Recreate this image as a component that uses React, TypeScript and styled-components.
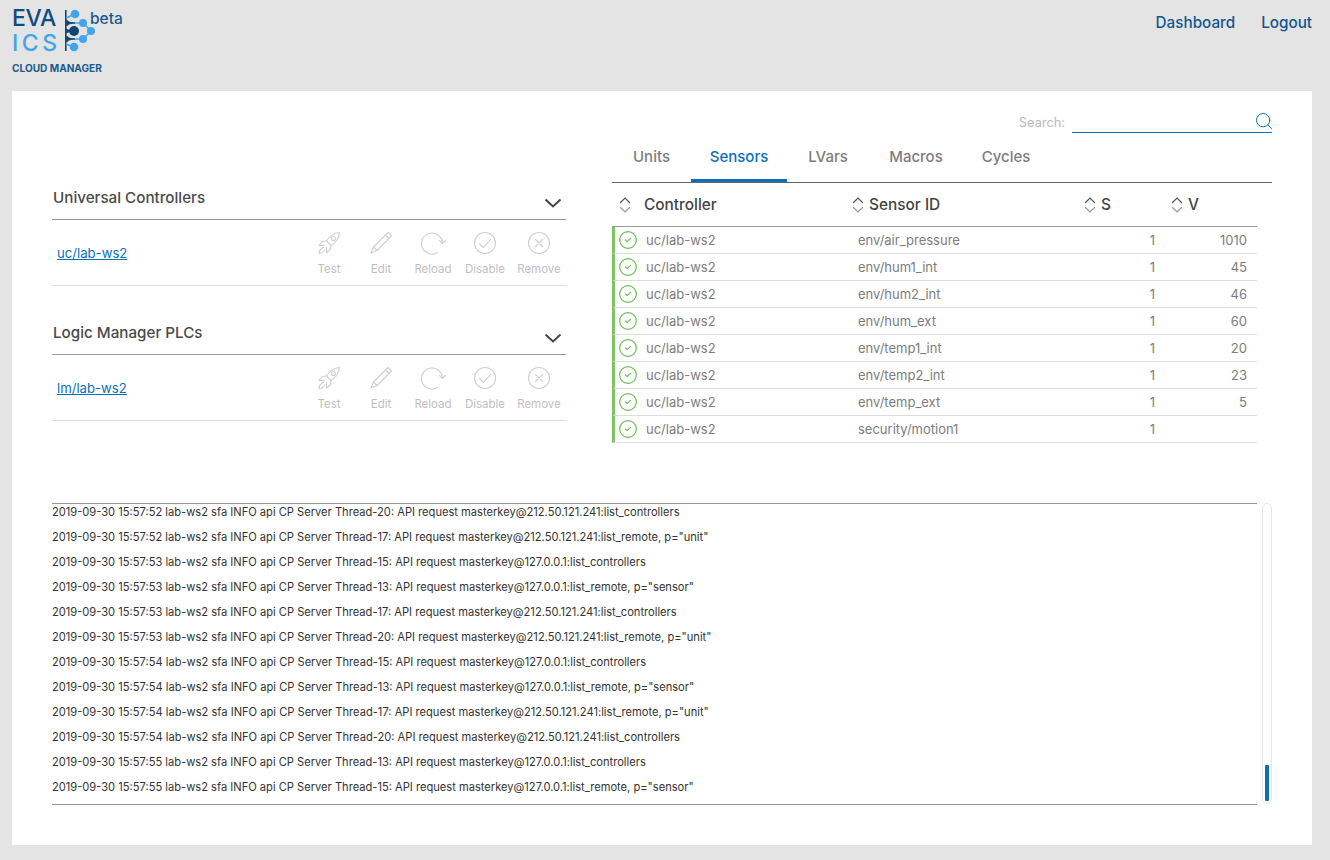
import React from 'react';
import styled, { createGlobalStyle } from 'styled-components';
import { Search as SearchIcon, CircleCheck } from 'lucide-react';

const Global = createGlobalStyle`
  html, body { margin: 0; padding: 0; background: #e4e4e4; }
  body { font-family: Inter, "Liberation Sans", sans-serif; color: #444; }
  * { box-sizing: border-box; }
`;

const Page = styled.div`
  width: 1330px;
  height: 860px;
  overflow: hidden;
  padding: 0 18px 0 12px;
  display: flex;
  flex-direction: column;
`;
const Header = styled.header`
  height: 91px;
  flex: none;
  display: flex;
  justify-content: space-between;
  align-items: flex-start;
`;
const Brand = styled.div`
  padding-top: 6px;
  width: 130px;
  display: flex;
  flex-direction: column;
`;
const BrandTop = styled.div`
  display: flex;
  align-items: flex-start;
`;
const BrandWords = styled.div`
  width: 52px;
  flex: none;
  display: flex;
  flex-direction: column;
`;
const Eva = styled.div`
  font-size: 23px;
  line-height: 24.5px;
  color: #0f4c81;
  letter-spacing: -0.3px;
  font-weight: 500;
`;
const Ics = styled.div`
  font-size: 23px;
  line-height: 24.5px;
  color: #41a5ee;
  letter-spacing: 3.5px;
  font-weight: 500;
`;
const BrandMark = styled.svg`
  width: 34px;
  height: 46px;
  margin: 2px 0 0 1px;
  flex: none;
`;
const Beta = styled.span`
  font-size: 15.5px;
  font-weight: 500;
  color: #1a5a8f;
  line-height: 18px;
  margin: 4px 0 0 -9px;
`;
const BrandCaption = styled.div`
  font-size: 10.1px;
  line-height: 12px;
  font-weight: 700;
  color: #1a5a8f;
  margin-top: 7px;
  white-space: nowrap;
`;
const Nav = styled.nav`
  display: flex;
  gap: 26px;
  padding-top: 14px;
`;
const NavLink = styled.a`
  font-size: 15.25px;
  line-height: 18px;
  font-weight: 500;
  color: #10578f;
`;
const Panel = styled.main`
  width: 1300px;
  height: 754px;
  background: #fff;
  padding: 0 40px;
  display: flex;
  flex-direction: column;
`;
const SearchBar = styled.div`
  height: 42px;
  flex: none;
  display: flex;
  justify-content: flex-end;
  align-items: flex-end;
  gap: 7px;
`;
const SearchLabel = styled.label`
  font-size: 12.8px;
  line-height: 17px;
  color: #bbb;
  padding-bottom: 2px;
`;
const SearchBox = styled.div`
  width: 200px;
  height: 22px;
  border-bottom: 1px solid #0b70b9;
  display: flex;
  justify-content: flex-end;
  align-items: center;
  color: #0b70b9;
`;
const SearchGlyph = styled.span`
  display: flex;
  margin: -2px -2px 0 0;
`;
const Columns = styled.div`
  height: 310px;
  flex: none;
  display: grid;
  grid-template-columns: 515px 660px;
  column-gap: 45px;
`;
const LeftCol = styled.div`
  padding-top: 49px;
  display: flex;
  flex-direction: column;
  gap: 31px;
`;
const Section = styled.section`
  display: flex;
  flex-direction: column;
`;
const SectionHead = styled.div`
  height: 38px;
  border-bottom: 1px solid #999;
  display: flex;
  justify-content: space-between;
  align-items: flex-start;
  margin-right: 1px;
`;
const SectionTitle = styled.h3`
  margin: 6px 0 0 1px;
  font-size: 15.2px;
  line-height: 20px;
  font-weight: 500;
  color: #4a4a4a;
`;
const Toggle = styled.svg`
  width: 18px;
  height: 10px;
  margin: 16px 4px 0 0;
`;
const CtrlRow = styled.div`
  height: 66px;
  border-bottom: 1px solid #ddd;
  display: flex;
  justify-content: space-between;
  align-items: center;
  padding-left: 5px;
`;
const CtrlLink = styled.a`
  font-size: 13.15px;
  color: #0b70b9;
  text-decoration: underline;
`;
const Actions = styled.div`
  display: flex;
`;
const Action = styled.div<{ $w: number }>`
  width: ${p => p.$w}px;
  display: flex;
  flex-direction: column;
  align-items: center;
  gap: 7px;
  font-size: 11.5px;
  line-height: 13px;
  color: #bfbfbf;
`;
const ActionIcon = styled.svg`
  width: 26px;
  height: 26px;
  fill: none;
  stroke: #cfcfcf;
  stroke-width: 1.1;
  stroke-linecap: round;
  stroke-linejoin: round;
`;
const RightCol = styled.div`
  display: flex;
  flex-direction: column;
`;
const Tabs = styled.div`
  height: 50px;
  flex: none;
  display: flex;
  border-bottom: 1px solid #666;
`;
const Tab = styled.div<{ $active?: boolean; $w: number }>`
  width: ${p => p.$w}px;
  height: 49px;
  display: flex;
  justify-content: center;
  padding-top: 14px;
  font-size: 15px;
  line-height: 20px;
  font-weight: 500;
  color: ${p => (p.$active ? '#0b70b9' : '#7d7d7d')};
  border-bottom: 3px solid ${p => (p.$active ? '#0b70b9' : 'transparent')};
`;
const Table = styled.div`
  width: 645px;
`;
const rowGrid = `
  display: grid;
  grid-template-columns: 232px 227px 87px 1fr;
`;
const HeadRow = styled.div`
  ${rowGrid}
  height: 44px;
  border-bottom: 1px solid #999;
  align-items: center;
`;
const HeadCell = styled.div<{ $gap: number; $pad: number }>`
  display: flex;
  align-items: center;
  gap: ${p => p.$gap}px;
  padding-left: ${p => p.$pad}px;
  font-size: 15.4px;
  font-weight: 500;
  color: #444;
`;
const Row = styled.div`
  ${rowGrid}
  height: 27px;
  border-bottom: 1px solid #ddd;
  border-left: 3px solid #7ec462;
  align-items: center;
  font-size: 13px;
  color: #7d7d7d;
`;
const NameCell = styled.div`
  display: flex;
  align-items: center;
  gap: 8px;
  padding-left: 3px;
`;
const IdCell = styled.div`
  margin-left: 11px;
`;
const StatusCell = styled.div`
  text-align: right;
  padding-right: 6px;
`;
const ValueCell = styled.div`
  text-align: right;
  padding-right: 10px;
`;
const StatusIcon = styled.span`
  display: flex;
  color: #6cbd55;
`;
const LogWrap = styled.div`
  margin-top: 60px;
  display: flex;
  gap: 5px;
  height: 302px;
`;
const Log = styled.div`
  width: 1205px;
  border-top: 1px solid #999;
  border-bottom: 1px solid #999;
  padding-top: 1px;
  overflow: hidden;
`;
const LogLine = styled.div`
  height: 25px;
  line-height: 15px;
  font-size: 11.13px;
  color: #333;
  white-space: nowrap;
`;
const Track = styled.div`
  width: 10px;
  height: 301px;
  border: 1px solid #e6e6e6;
  border-radius: 5px;
  display: flex;
  flex-direction: column;
  justify-content: flex-end;
  padding: 0 2px 2px;
`;
const Thumb = styled.div`
  height: 36px;
  background: #0b70b9;
  border-radius: 1px;
`;

const Sort = () => (
  <svg width="12" height="18" viewBox="0 0 12 18" fill="none" strokeWidth="1.2" strokeLinecap="round">
    <path d="M1.5 6.5 6 2l4.5 4.5" stroke="#555" />
    <path d="M1.5 11.5 6 16l4.5-4.5" stroke="#999" />
  </svg>
);

const Mark = () => (
  <BrandMark viewBox="0 0 34 46">
    <rect x="0" y="2" width="1.6" height="41" fill="#10466f" />
    <g stroke="#41a5ee" strokeWidth="1.4" fill="none">
      <path d="M1 10 L10 6 M4 15 H18 M4 31 H18 M1 36 L9 39 M18 15 L26 23 M18 31 L26 23" />
    </g>
    <circle cx="10" cy="6" r="4.3" fill="#41a5ee" />
    <circle cx="18" cy="15" r="4" fill="#41a5ee" />
    <circle cx="26" cy="23" r="4" fill="#41a5ee" />
    <circle cx="18" cy="31" r="4" fill="#41a5ee" />
    <circle cx="9" cy="39" r="4.3" fill="#41a5ee" />
    <path d="M1.6 21 Q4 23 9 23 Q4 23 1.6 25Z" fill="#10466f" stroke="#10466f" strokeWidth="0.8" />
    <circle cx="9" cy="23" r="5" fill="#10466f" />
    <path d="M1.6 12 Q4 15 10 15 Q4 15 1.6 18Z" fill="#10466f" stroke="#10466f" strokeWidth="0.8" />
    <path d="M1.6 28 Q4 31 10 31 Q4 31 1.6 34Z" fill="#10466f" stroke="#10466f" strokeWidth="0.8" />
  </BrandMark>
);

const RocketGlyph = () => (
  <ActionIcon viewBox="0 0 26 26">
    <path d="M23.5 2.5C17.5 3 13.5 6 10.5 11L15 15.5C20 12.5 23 8.5 23.5 2.5Z" />
    <circle cx="17.5" cy="8.5" r="2" />
    <path d="M10.5 11 6.5 11.5 3 15.5 8.5 15.5" />
    <path d="M15 15.5 14.5 19.5 10.5 23 10.5 17.5" />
    <path d="M7.5 17 3.5 20.5 3 23.5 6 23 9 19.5" />
  </ActionIcon>
);
const PencilGlyph = () => (
  <ActionIcon viewBox="0 0 26 26">
    <path d="M20 2.5 23.5 6 9 20.5 3 23 5.5 17Z" />
    <path d="M17.5 5 21 8.5" />
    <path d="M5.5 17 9 20.5" />
  </ActionIcon>
);
const ReloadGlyph = () => (
  <ActionIcon viewBox="0 0 26 26">
    <path d="M17.5 22.5A10.5 10.5 0 1 1 22.5 13" />
    <path d="M19.5 10.5 22.5 13.5 25.5 10.5" />
  </ActionIcon>
);
const CheckGlyph = () => (
  <ActionIcon viewBox="0 0 26 26">
    <circle cx="13" cy="13" r="10.5" />
    <path d="M7.5 13.5 11.5 17.5 18.5 9.5" />
  </ActionIcon>
);
const CrossGlyph = () => (
  <ActionIcon viewBox="0 0 26 26">
    <circle cx="13" cy="13" r="10.5" />
    <path d="M9.5 9.5 16.5 16.5M16.5 9.5 9.5 16.5" />
  </ActionIcon>
);

const actions = [
  { label: 'Test', w: 52, Icon: RocketGlyph },
  { label: 'Edit', w: 52, Icon: PencilGlyph },
  { label: 'Reload', w: 52, Icon: ReloadGlyph },
  { label: 'Disable', w: 52, Icon: CheckGlyph },
  { label: 'Remove', w: 56, Icon: CrossGlyph },
];

const Controller = ({ title, id }: { title: string; id: string }) => (
  <Section>
    <SectionHead>
      <SectionTitle>{title}</SectionTitle>
      <Toggle viewBox="0 0 18 10" fill="none" stroke="#444" strokeWidth="2">
        <path d="M1.5 1.5 9 8.5l7.5-7" />
      </Toggle>
    </SectionHead>
    <CtrlRow>
      <CtrlLink>{id}</CtrlLink>
      <Actions>
        {actions.map(({ label, w, Icon }) => (
          <Action key={label} $w={w}>
            <Icon />
            {label}
          </Action>
        ))}
      </Actions>
    </CtrlRow>
  </Section>
);

const sensors: [string, string][] = [
  ['env/air_pressure', '1010'],
  ['env/hum1_int', '45'],
  ['env/hum2_int', '46'],
  ['env/hum_ext', '60'],
  ['env/temp1_int', '20'],
  ['env/temp2_int', '23'],
  ['env/temp_ext', '5'],
  ['security/motion1', ''],
];

const logs = [
  '2019-09-30 15:57:52 lab-ws2 sfa INFO api CP Server Thread-20: API request masterkey@212.50.121.241:list_controllers',
  '2019-09-30 15:57:52 lab-ws2 sfa INFO api CP Server Thread-17: API request masterkey@212.50.121.241:list_remote, p="unit"',
  '2019-09-30 15:57:53 lab-ws2 sfa INFO api CP Server Thread-15: API request masterkey@127.0.0.1:list_controllers',
  '2019-09-30 15:57:53 lab-ws2 sfa INFO api CP Server Thread-13: API request masterkey@127.0.0.1:list_remote, p="sensor"',
  '2019-09-30 15:57:53 lab-ws2 sfa INFO api CP Server Thread-17: API request masterkey@212.50.121.241:list_controllers',
  '2019-09-30 15:57:53 lab-ws2 sfa INFO api CP Server Thread-20: API request masterkey@212.50.121.241:list_remote, p="unit"',
  '2019-09-30 15:57:54 lab-ws2 sfa INFO api CP Server Thread-15: API request masterkey@127.0.0.1:list_controllers',
  '2019-09-30 15:57:54 lab-ws2 sfa INFO api CP Server Thread-13: API request masterkey@127.0.0.1:list_remote, p="sensor"',
  '2019-09-30 15:57:54 lab-ws2 sfa INFO api CP Server Thread-17: API request masterkey@212.50.121.241:list_remote, p="unit"',
  '2019-09-30 15:57:54 lab-ws2 sfa INFO api CP Server Thread-20: API request masterkey@212.50.121.241:list_controllers',
  '2019-09-30 15:57:55 lab-ws2 sfa INFO api CP Server Thread-13: API request masterkey@127.0.0.1:list_controllers',
  '2019-09-30 15:57:55 lab-ws2 sfa INFO api CP Server Thread-15: API request masterkey@127.0.0.1:list_remote, p="sensor"',
];

const tabs = [
  { label: 'Units', w: 79 },
  { label: 'Sensors', w: 96, active: true },
  { label: 'LVars', w: 82 },
  { label: 'Macros', w: 94 },
  { label: 'Cycles', w: 86 },
];

export default function App() {
  return (
    <Page>
      <Global />
      <Header>
        <Brand>
          <BrandTop>
            <BrandWords>
              <Eva>EVA</Eva>
              <Ics>ICS</Ics>
            </BrandWords>
            <Mark />
            <Beta>beta</Beta>
          </BrandTop>
          <BrandCaption>CLOUD MANAGER</BrandCaption>
        </Brand>
        <Nav>
          <NavLink>Dashboard</NavLink>
          <NavLink>Logout</NavLink>
        </Nav>
      </Header>
      <Panel>
        <SearchBar>
          <SearchLabel>Search:</SearchLabel>
          <SearchBox><SearchGlyph><SearchIcon size={20} strokeWidth={1.2} /></SearchGlyph></SearchBox>
        </SearchBar>
        <Columns>
          <LeftCol>
            <Controller title="Universal Controllers" id="uc/lab-ws2" />
            <Controller title="Logic Manager PLCs" id="lm/lab-ws2" />
          </LeftCol>
          <RightCol>
            <Tabs>
              {tabs.map(t => (
                <Tab key={t.label} $w={t.w} $active={t.active}>{t.label}</Tab>
              ))}
            </Tabs>
            <Table>
              <HeadRow>
                <HeadCell $gap={13} $pad={7}><Sort />Controller</HeadCell>
                <HeadCell $gap={5} $pad={8}><Sort />Sensor ID</HeadCell>
                <HeadCell $gap={5} $pad={13}><Sort />S</HeadCell>
                <HeadCell $gap={5} $pad={13}><Sort />V</HeadCell>
              </HeadRow>
              {sensors.map(([id, v]) => (
                <Row key={id}>
                  <NameCell>
                    <StatusIcon><CircleCheck size={20} strokeWidth={1.4} /></StatusIcon>
                    uc/lab-ws2
                  </NameCell>
                  <IdCell>{id}</IdCell>
                  <StatusCell>1</StatusCell>
                  <ValueCell>{v}</ValueCell>
                </Row>
              ))}
            </Table>
          </RightCol>
        </Columns>
        <LogWrap>
          <Log>
            {logs.map((l, i) => <LogLine key={i}>{l}</LogLine>)}
          </Log>
          <Track><Thumb /></Track>
        </LogWrap>
      </Panel>
    </Page>
  );
}
